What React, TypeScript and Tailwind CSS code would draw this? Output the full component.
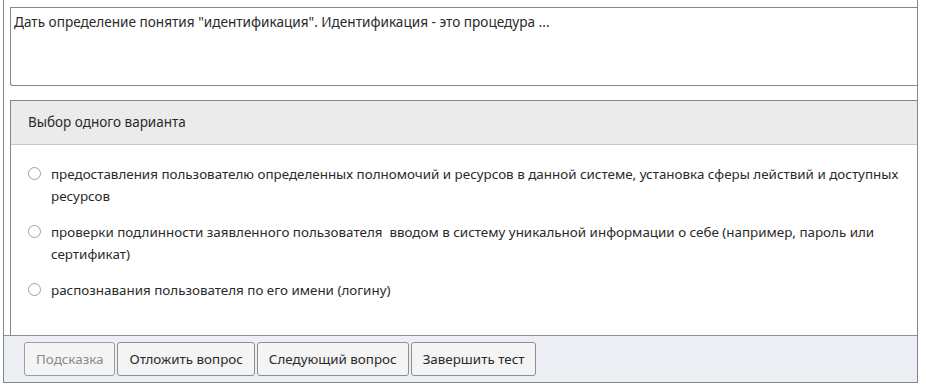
import React from 'react';

const options = [
  'предоставления пользователю определенных полномочий и ресурсов в данной системе, установка сферы лействий и доступных ресурсов',
  'проверки подлинности заявленного пользователя  вводом в систему уникальной информации о себе (например, пароль или сертификат)',
  'распознавания пользователя по его имени (логину)',
];

export default function App() {
  return (
    <div
      className="w-[926px] h-[390px] bg-white overflow-hidden text-[#2a2a2a]"
      style={{ fontFamily: '"Noto Sans", "Open Sans", sans-serif' }}
    >
      <div className="ml-[3px] w-[915px] h-[383px] border-l border-r border-b border-[#7d8a8a] pl-[6px] pt-[7px] flex flex-col">
        {/* вопрос */}
        <div className="h-[79px] border border-[#7d8a8a] border-r-0 rounded-bl-[3px] bg-white px-[3px] pt-[4px] text-[13.6px] leading-[20px]">
          Дать определение понятия "идентификация". Идентификация - это процедура ...
        </div>

        {/* варианты */}
        <div className="mt-[14px] h-[235px] border-t border-l border-[#7d8a8a] flex flex-col">
          <div className="h-[44px] bg-[#ebebeb] border-b border-[#c8c8c8] flex items-center pl-[17px] text-[13.5px]">
            Выбор одного варианта
          </div>
          <div className="pt-[18px] pl-[17px] flex flex-col gap-[14px]">
            {options.map((o, i) => (
              <label key={i} className="flex items-start gap-[10px] text-[13.4px] leading-[22px]">
                <span className="mt-[4px] w-[13px] h-[13px] shrink-0 rounded-full border border-[#a0a0a0] bg-white" />
                <span className="whitespace-pre-wrap">{o}</span>
              </label>
            ))}
          </div>
        </div>

        {/* кнопки */}
        <div className="flex-1 -ml-[6px] pl-[20px] bg-[#eceef3] border-t border-[#8a9494] flex items-center gap-[2px]">
          <button className="h-[34px] px-[11px] border border-[#9aa0a0] rounded-[3px] bg-[#f4f4f4] text-[13.4px] text-[#8a8a8a]">
            Подсказка
          </button>
          <button className="h-[34px] px-[11px] border border-[#8a8f8f] rounded-[3px] bg-[#f4f4f4] text-[13.4px]">
            Отложить вопрос
          </button>
          <button className="h-[34px] px-[11px] border border-[#8a8f8f] rounded-[3px] bg-[#f4f4f4] text-[13.4px]">
            Следующий вопрос
          </button>
          <button className="h-[34px] px-[11px] border border-[#8a8f8f] rounded-[3px] bg-[#f4f4f4] text-[13.4px]">
            Завершить тест
          </button>
        </div>
      </div>
    </div>
  );
}
